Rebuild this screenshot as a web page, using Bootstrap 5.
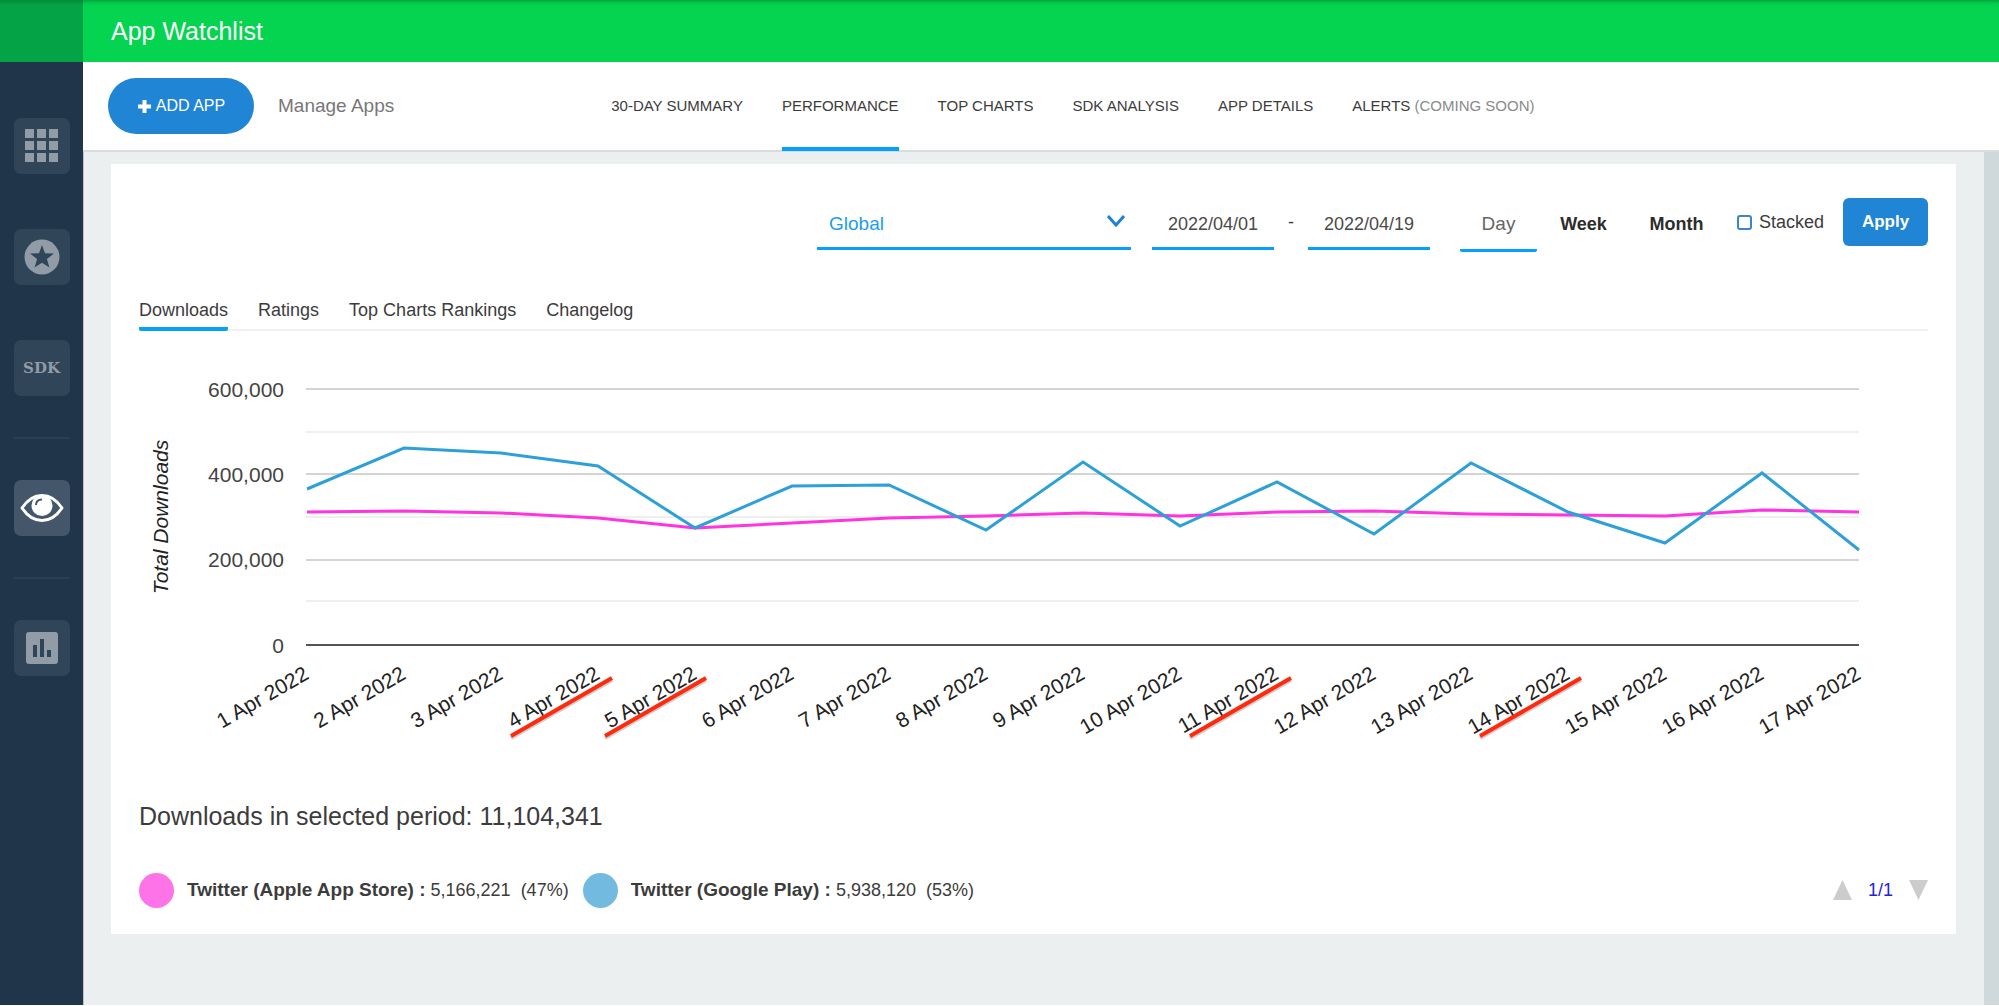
<!DOCTYPE html>
<html lang="en">
<head>
<meta charset="utf-8">
<meta name="viewport" content="width=device-width, initial-scale=1">
<title>App Watchlist</title>
<link href="https://cdn.jsdelivr.net/npm/bootstrap@5.3.0/dist/css/bootstrap.min.css" rel="stylesheet">
<style>
  body { font-family: "Liberation Sans", Arial, sans-serif; font-size: 18px; line-height: 24px; color: #3c3c3c; background: #fff; }
  a { text-decoration: none; color: inherit; }
  .shell { min-height: 1005px; }
  .topbar { height: 62px; background: linear-gradient(#02a53f, #04c94b 3px, #04d44f 7px); color: #fff; font-size: 25px; line-height: 30px; }
  .topbar-corner { width: 83px; background: linear-gradient(#048a38, #03a346 5px); }
  .topbar h1 { font-size: 25px; line-height: 30px; }
  .rail { width: 83px; background: #21354a; padding-top: 56px; }
  .rail-tile { width: 56px; height: 56px; border-radius: 7px; background: #314559; color: #919ca7; }
  .rail-tile.is-on { background: #43566a; color: #fff; }
  .rail-gap { height: 55px; }
  .rail-rule { width: 56px; height: 2px; margin: 41px 0; background: #2c4055; }
  .rail-sdk { font: bold 15px/24px "DejaVu Serif", serif; }
  .subnav { height: 90px; border-bottom: 2px solid #d9dbdc; padding-left: 25px; }
  .add-btn { width: 146px; height: 56px; border-radius: 28px; background: #2085d4; color: #fff; font-size: 16px; }
  .manage-link { font-size: 19px; color: #777; }
  .section-tabs { gap: 39px; margin-left: 217px; font-size: 15px; color: #3c3c3c; }
  .section-tabs a { display: flex; align-items: center; height: 90px; border-bottom: 4px solid transparent; border-top: 4px solid transparent; }
  .section-tabs a.active { border-bottom-color: #06a0fc; }
  .soon { color: #8a8a8a; }
  .canvas-area { background: #ebefef; border-right: 15px solid #cfd8db; padding: 12px 28px 70px; box-shadow: inset 1px 0 #b9c2c8; }
  .panel { background: #fff; padding: 34px 28px 26px; }
  .filters { height: 56px; }
  .line-field { border: 0; border-bottom: 3px solid #06a0fc; border-radius: 0; background: transparent; height: 52px; color: #4a4a4a; outline: 0; }
  .region-field { width: 314px; padding: 2px 12px 0; margin-right: 21px; font-size: 19px; color: #1b9df0; appearance: none;
    background: url("data:image/svg+xml,%3Csvg xmlns='http://www.w3.org/2000/svg' viewBox='0 0 18 12'%3E%3Cpath d='M1 1l8 9 8-9' fill='none' stroke='%231f80d8' stroke-width='3'/%3E%3C/svg%3E") no-repeat right 6px top 17px / 18px 12px; }
  .date-field { width: 122px; text-align: center; padding: 3px 0 0; font-size: 18px; }
  .date-dash { width: 34px; text-align: center; padding-top: 12px; }
  .period-group { margin-left: 30px; }
  .period-btn { width: 93px; height: 54px; border: 0; border-bottom: 3px solid transparent; border-radius: 2px; background: none; padding: 0; font-weight: bold; font-size: 18px; color: #2c2c2c; }
  .period-btn.active { width: 77px; font-weight: normal; color: #666; border-bottom-color: #06a0fc; font-size: 19px; }
  .stack-label { width: 90px; gap: 7px; margin: 12px 16px 0 14px; }
  .stack-box { appearance: none; width: 15px; height: 15px; border: 2px solid #3f83c8; border-radius: 3px; background: #fff; margin: 0; }
  .apply-btn { width: 85px; height: 48px; border-radius: 6px; background: #2085d4; color: #fff; font-weight: bold; font-size: 17px; }
  .view-tabs { gap: 30px; border-bottom: 2px solid #eff0f0; margin-top: 34px; height: 43px; }
  .view-tabs a { height: 43px; padding-top: 11px; border-bottom: 4px solid transparent; line-height: 22px; }
  .view-tabs a.active { border-bottom-color: #06a0fc; border-radius: 2px; }
  .chart { display: block; width: 100%; height: auto; font-size: 21px; }
  .period-total { font-size: 25px; line-height: 32px; margin-top: 20px; }
  .legend-dot { width: 35px; height: 35px; border-radius: 50%; }
  .legend-row { margin-top: 40px; height: 36px; }
  .legend-row strong { font-size: 19px; }
  .legend-text { margin-left: 13px; margin-right: 14px; }
  .pager-btn { border: 0; background: none; padding: 0; line-height: 0; }
  .pager-text { color: #2222d8; }
</style>
</head>
<body>
<div class="shell d-flex flex-column">
  <header class="topbar d-flex">
    <div class="topbar-corner"></div>
    <h1 class="m-0 ps-4 ms-1 pt-3 fw-normal">App Watchlist</h1>
  </header>
  <div class="d-flex flex-grow-1">
    <aside class="rail d-flex flex-column align-items-center flex-shrink-0">
      <a href="#" class="rail-tile d-flex align-items-center justify-content-center" aria-label="Apps">
        <svg width="34" height="34" viewBox="0 0 34 34" fill="currentColor"><path d="M0 0h9v9H0zM12 0h9v9h-9zM24 0h9v9h-9zM0 12h9v9H0zM12 12h9v9h-9zM24 12h9v9h-9zM0 24h9v9H0zM12 24h9v9h-9zM24 24h9v9h-9z"/></svg>
      </a>
      <div class="rail-gap"></div>
      <a href="#" class="rail-tile d-flex align-items-center justify-content-center" aria-label="Top apps">
        <svg width="36" height="36" viewBox="0 0 36 36"><circle cx="18" cy="18" r="17.5" fill="currentColor"/><path d="M18 6l3 8.300 8.900.300-7 5.500 2.500 8.500L18 23.700l-7.400 4.900 2.500-8.500-7-5.500 8.900-.300z" fill="#314559"/></svg>
      </a>
      <div class="rail-gap"></div>
      <a href="#" class="rail-tile rail-sdk d-flex align-items-center justify-content-center">SDK</a>
      <div class="rail-rule"></div>
      <a href="#" class="rail-tile is-on d-flex align-items-center justify-content-center" aria-label="Watchlist">
        <svg width="44" height="30" viewBox="0 0 44 30"><path d="M2 15C8 6 14 2.500 22 2.500S36 6 42 15C36 24 30 27.500 22 27.500S8 24 2 15z" fill="none" stroke="currentColor" stroke-width="3" stroke-linejoin="round"/><circle cx="22" cy="12.500" r="10.500" fill="currentColor"/><path d="M16 12c0-3.500 2.500-5.500 6-5.500" fill="none" stroke="#43566a" stroke-width="2"/></svg>
      </a>
      <div class="rail-rule"></div>
      <a href="#" class="rail-tile d-flex align-items-center justify-content-center" aria-label="Reports">
        <svg width="32" height="32" viewBox="0 0 32 32"><rect width="32" height="32" rx="3" fill="currentColor"/><path d="M7 13h4v12H7zM14 7h4v18h-4zM21 18h4v7h-4z" fill="#314559"/></svg>
      </a>
    </aside>
    <div class="flex-grow-1 d-flex flex-column">
      <nav class="subnav d-flex align-items-center">
        <button type="button" class="btn add-btn d-flex align-items-center justify-content-center">
          <svg class="me-1" width="15" height="15" viewBox="0 0 15 15" fill="currentColor"><path d="M5.500 1h4v4.500H14v4H9.500V14h-4V9.500H1v-4h4.500z"/></svg>ADD APP</button>
        <a href="#" class="manage-link ms-4">Manage Apps</a>
        <div class="section-tabs d-flex text-nowrap">
          <a href="#">30-DAY SUMMARY</a>
          <a href="#" class="active">PERFORMANCE</a>
          <a href="#">TOP CHARTS</a>
          <a href="#">SDK ANALYSIS</a>
          <a href="#">APP DETAILS</a>
          <a href="#">ALERTS&nbsp;<span class="soon">(COMING SOON)</span></a>
        </div>
      </nav>
      <main class="canvas-area flex-grow-1">
        <section class="panel">
          <form class="filters d-flex justify-content-end align-items-start">
            <select class="line-field region-field" aria-label="Region"><option>Global</option></select>
            <input class="line-field date-field" type="text" value="2022/04/01" aria-label="From">
            <span class="date-dash">-</span>
            <input class="line-field date-field" type="text" value="2022/04/19" aria-label="To">
            <div class="period-group d-flex">
              <button type="button" class="period-btn active">Day</button>
              <button type="button" class="period-btn">Week</button>
              <button type="button" class="period-btn">Month</button>
            </div>
            <label class="stack-label d-flex align-items-center"><input class="stack-box" type="checkbox">Stacked</label>
            <button type="button" class="btn apply-btn p-0">Apply</button>
          </form>
          <nav class="view-tabs d-flex">
            <a href="#" class="active">Downloads</a>
            <a href="#">Ratings</a>
            <a href="#">Top Charts Rankings</a>
            <a href="#">Changelog</a>
          </nav>
          <svg class="chart" viewBox="0 0 1789 449" role="img" aria-label="Total downloads per day">
            <g stroke="#d4d4d4" stroke-width="2"><path d="M167 58H1720M167 143H1720M167 229H1720"/></g>
            <g stroke="#efefef" stroke-width="2"><path d="M167 101H1720M167 186H1720M167 270H1720"/></g>
            <path d="M167 314H1720" stroke="#555" stroke-width="2"/>
            <g fill="none" stroke-width="3">
              <polyline stroke="#ff33e0" points="168,181 265,180 362,182 459,187 556,197 653,192 750,187 847,185 944,182 1041,185 1138,181 1235,180 1332,183 1429,184 1526,185 1623,179 1720,181"/>
              <polyline stroke="#2ea0d8" points="168,158 265,117 362,122 459,135 556,197 653,155 750,154 847,199 944,131 1041,195 1138,151 1235,203 1332,132 1429,181 1526,212 1623,142 1720,219"/>
            </g>
            <g fill="#444" text-anchor="end"><text x="145" y="66">600,000</text><text x="145" y="151">400,000</text><text x="145" y="236">200,000</text><text x="145" y="322">0</text></g>
            <text transform="translate(29 186) rotate(-90)" text-anchor="middle" font-style="italic" fill="#222">Total Downloads</text>
            <g fill="#222" text-anchor="end">
              <text transform="translate(171 347) rotate(-30)">1 Apr 2022</text>
              <text transform="translate(268 347) rotate(-30)">2 Apr 2022</text>
              <text transform="translate(365 347) rotate(-30)">3 Apr 2022</text>
              <text transform="translate(462 347) rotate(-30)">4 Apr 2022</text>
              <text transform="translate(559 347) rotate(-30)">5 Apr 2022</text>
              <text transform="translate(656 347) rotate(-30)">6 Apr 2022</text>
              <text transform="translate(753 347) rotate(-30)">7 Apr 2022</text>
              <text transform="translate(850 347) rotate(-30)">8 Apr 2022</text>
              <text transform="translate(947 347) rotate(-30)">9 Apr 2022</text>
              <text transform="translate(1044 347) rotate(-30)">10 Apr 2022</text>
              <text transform="translate(1141 347) rotate(-30)">11 Apr 2022</text>
              <text transform="translate(1238 347) rotate(-30)">12 Apr 2022</text>
              <text transform="translate(1335 347) rotate(-30)">13 Apr 2022</text>
              <text transform="translate(1432 347) rotate(-30)">14 Apr 2022</text>
              <text transform="translate(1529 347) rotate(-30)">15 Apr 2022</text>
              <text transform="translate(1626 347) rotate(-30)">16 Apr 2022</text>
              <text transform="translate(1723 347) rotate(-30)">17 Apr 2022</text>
            </g>
            <path d="M372 407l101-58M466 407l101-58M1051 407l101-58M1341 407l101-58" stroke="#999" stroke-opacity=".5" stroke-width="4"/>
            <path d="M372 405l101-58M466 405l101-58M1051 405l101-58M1341 405l101-58" stroke="#ff2a0c" stroke-width="4"/>
          </svg>
          <h2 class="period-total mb-0 fw-normal">Downloads in selected period: 11,104,341</h2>
          <div class="legend-row d-flex align-items-center">
            <span class="legend-dot" style="background:#ff73e9"></span>
            <span class="legend-text"><strong>Twitter (Apple App Store) :</strong> 5,166,221 &nbsp;(47%)</span>
            <span class="legend-dot" style="background:#73bae1"></span>
            <span class="legend-text"><strong>Twitter (Google Play) :</strong> 5,938,120 &nbsp;(53%)</span>
            <div class="ms-auto d-flex align-items-center gap-3">
              <button type="button" class="pager-btn" aria-label="Previous"><svg width="19" height="20" viewBox="0 0 19 20"><path d="M9.500 0L19 20H0z" fill="#ccc"/></svg></button>
              <span class="pager-text">1/1</span>
              <button type="button" class="pager-btn" aria-label="Next"><svg width="19" height="20" viewBox="0 0 19 20"><path d="M0 0h19L9.500 20z" fill="#ccc"/></svg></button>
            </div>
          </div>
        </section>
      </main>
    </div>
  </div>
</div>
<script src="https://cdn.jsdelivr.net/npm/bootstrap@5.3.0/dist/js/bootstrap.bundle.min.js"></script>
</body>
</html>
